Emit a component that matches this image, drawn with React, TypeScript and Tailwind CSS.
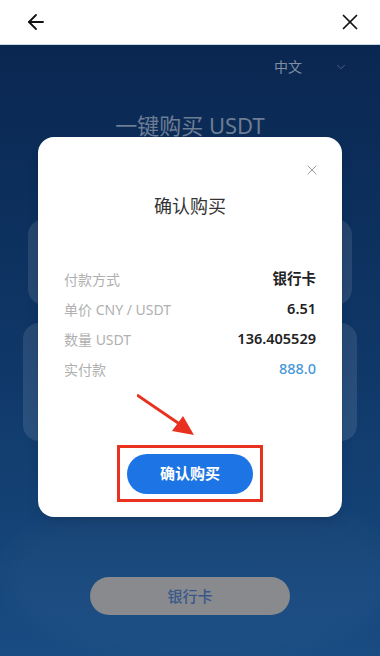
import { ArrowLeft, X, ChevronDown } from "lucide-react";

const rows = [
  { label: "付款方式", value: "银行卡", blue: false },
  { label: "单价 CNY / USDT", value: "6.51", blue: false },
  { label: "数量 USDT", value: "136.405529", blue: false },
  { label: "实付款", value: "888.0", blue: true },
];

const font = { fontFamily: '"Noto Sans", "Noto Sans CJK SC", sans-serif' };

export default function App() {
  return (
    <div className="flex h-[656px] w-[380px] flex-col overflow-hidden bg-white" style={font}>
      {/* Header */}
      <div className="flex h-[45px] shrink-0 items-center justify-between border-b border-[#c9d6e3] bg-white pl-[24px] pr-[17px]">
        <ArrowLeft className="h-[24px] w-[24px] text-[#111]" strokeWidth={1.8} />
        <X className="h-[26px] w-[26px] text-[#111]" strokeWidth={1.6} />
      </div>

      {/* Page behind, dimmed */}
      <div className="relative flex flex-1 flex-col bg-gradient-to-b from-[#0a2751] via-[#0f3767] to-[#194c83]">
        <div className="flex items-center justify-end gap-[32px] pr-[32px] pt-[11px] text-[14px] text-[#7f8ea4]">
          <span>中文</span>
          <ChevronDown className="h-[14px] w-[14px] text-[#4f6a8c]" strokeWidth={1.5} />
        </div>
        <div className="mt-[32px] text-center text-[22px] text-[#6d7d94]">一键购买 USDT</div>
        <div className="mx-[28px] mt-[77px] h-[86px] rounded-2xl bg-white/10" />
        <div className="mx-[23px] mt-[18px] h-[118px] rounded-2xl bg-white/10" />
        <div className="mx-auto mt-[50px] h-[170px] w-[400px] rounded-[50%] bg-white/[0.025] blur-md" />
        <div className="absolute left-[90px] top-[532px] flex h-[38px] w-[200px] items-center justify-center rounded-full bg-[#888a8e] text-[15px] font-medium text-[#37598a]">
          银行卡
        </div>

        {/* Modal */}
        <div className="absolute left-[38px] top-[92px] flex h-[380px] w-[304px] flex-col rounded-[16px] bg-white shadow-lg">
          <div className="flex justify-end pr-[22px] pt-[25px]">
            <X className="h-[16px] w-[16px] text-[#9a9a9a]" strokeWidth={1.5} />
          </div>
          <div className="mt-[15px] text-center text-[18px] leading-[26px] text-[#333]">确认购买</div>
          <div className="mt-[45px] flex flex-col px-[26px]">
            {rows.map((r) => (
              <div key={r.label} className="flex h-[30px] items-center justify-between text-[14px]">
                <span className="text-[#b0b0b0]">{r.label}</span>
                <span className={r.blue ? "text-[14.5px] font-medium text-[#4a98d6]" : "text-[14.5px] font-semibold text-[#222]"}>{r.value}</span>
              </div>
            ))}
          </div>

          <svg className="absolute left-[99px] top-[256px]" width="60" height="44" viewBox="0 0 60 44">
            <line x1="0" y1="2" x2="44" y2="32" stroke="#e8321f" strokeWidth="2.8" />
            <polygon points="57,42 35,38 46,23" fill="#e8321f" />
          </svg>

          <div className="mx-auto mt-[61px] flex h-[57px] w-[146px] items-center justify-center border-[3px] border-[#e8321f]">
            <div className="flex h-[40px] w-[126px] items-center justify-center rounded-full bg-[#1d74e4] text-[15px] font-bold text-white">
              确认购买
            </div>
          </div>
        </div>
      </div>
    </div>
  );
}
